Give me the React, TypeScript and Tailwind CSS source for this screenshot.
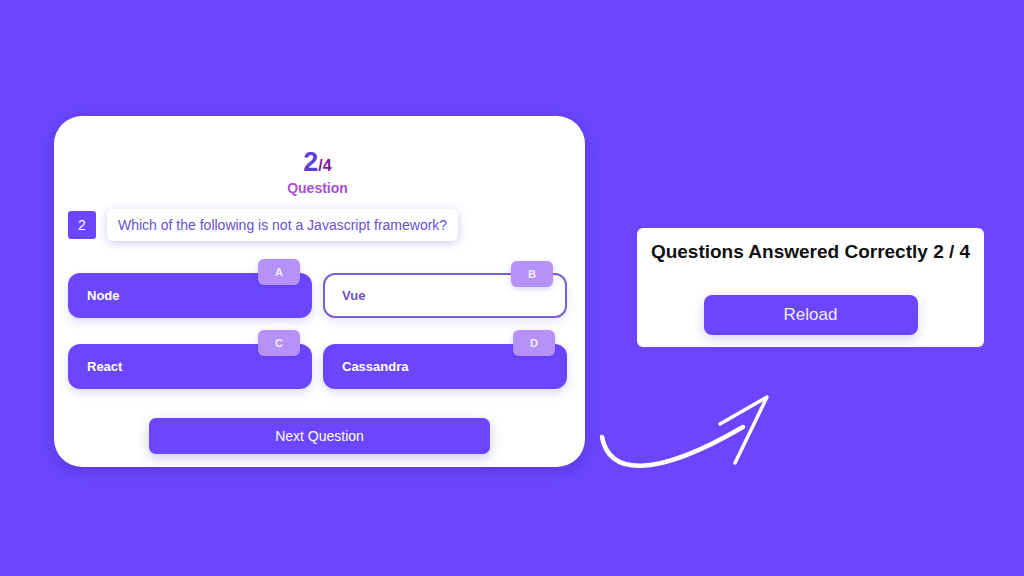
const options = [
  { label: "A", text: "Node", active: true },
  { label: "B", text: "Vue", active: false },
  { label: "C", text: "React", active: true },
  { label: "D", text: "Cassandra", active: true },
];

function OptionButton({ label, text, active }: { label: string; text: string; active: boolean }) {
  return (
    <div
      className={
        active
          ? "relative flex h-[45px] items-center rounded-[12px] bg-[#6b46fe] pl-[19px] text-[13px] font-bold text-white shadow-[0_4px_10px_rgba(80,50,200,0.18)]"
          : "relative flex h-[45px] items-center rounded-[12px] border-2 border-[#7b5fd6] bg-white pl-[17px] text-[13px] font-bold text-[#6b4fd0] shadow-[0_4px_10px_rgba(80,50,200,0.12)]"
      }
    >
      {text}
      <span className="absolute right-[12px] top-[-14px] flex h-[26px] w-[42px] items-center justify-center rounded-[6px] bg-[#b592f7] text-[11px] font-bold text-[#f3ecff] shadow-[0_2px_6px_rgba(80,50,200,0.2)]">
        {label}
      </span>
    </div>
  );
}

function QuizCard() {
  return (
    <div className="flex h-[351px] w-[531px] shrink-0 flex-col rounded-[28px] bg-white pl-[14px] pr-[18px] pt-[33px] shadow-[0_4px_16px_rgba(40,20,120,0.25)]">
      <div className="flex flex-col items-center">
        <div className="flex items-baseline leading-none">
          <span className="text-[27px] font-black text-[#5a3fd8]">2</span>
          <span className="text-[16px] font-bold text-[#7b1fa2]">/4</span>
        </div>
        <div className="mt-[5px] text-[14px] font-bold leading-none text-[#a94fd9]">Question</div>
      </div>

      <div className="mt-[14px] flex items-center gap-[11px]">
        <div className="flex h-[28px] w-[28px] items-center justify-center rounded-[3px] bg-[#6b46fe] text-[14px] text-white">
          2
        </div>
        <div className="flex h-[32px] items-center rounded-[6px] bg-white px-[11px] text-[14px] text-[#6a50d0] shadow-[0_2px_10px_rgba(100,70,220,0.3)]">
          Which of the following is not a Javascript framework?
        </div>
      </div>

      <div className="mt-[32px] grid grid-cols-2 gap-x-[11px] gap-y-[26px]">
        {options.map((o) => (
          <OptionButton key={o.label} {...o} />
        ))}
      </div>

      <div className="mt-[29px] flex justify-center pl-[4px]">
        <button className="flex h-[36px] w-[341px] items-center justify-center rounded-[7px] bg-[#6b46fe] text-[14px] text-white shadow-[0_4px_12px_rgba(60,40,160,0.25)]">
          Next Question
        </button>
      </div>
    </div>
  );
}

function ResultCard() {
  return (
    <div className="flex h-[119px] w-[347px] flex-col items-center rounded-[6px] bg-white pt-[13px]">
      <div className="text-[19px] font-bold leading-[21px] text-[#111111]">Questions Answered Correctly 2 / 4</div>
      <button className="mt-[33px] flex h-[40px] w-[214px] items-center justify-center rounded-[8px] bg-[#6b46fe] text-[17px] text-[#f1ecff] shadow-[0_4px_12px_rgba(60,40,160,0.2)]">
        Reload
      </button>
    </div>
  );
}

function CurvedArrow() {
  return (
    <svg width="180" height="85" viewBox="0 0 180 85" fill="none" className="ml-[-40px] mt-[45px]">
      <path
        d="M5 45 C 12 82, 55 88, 146 35"
        stroke="white"
        strokeWidth="4.5"
        strokeLinecap="round"
      />
      <path d="M123 32 L 170 5 L 138 71" stroke="white" strokeWidth="3.5" strokeLinecap="round" strokeLinejoin="round" />
    </svg>
  );
}

export default function App() {
  return (
    <div
      className="flex h-[576px] w-full overflow-hidden bg-[#6b46fe] pl-[54px] pt-[116px]"
      style={{ fontFamily: '"Liberation Sans", Arial, sans-serif' }}
    >
      <QuizCard />
      <div className="ml-[52px] mt-[112px] flex flex-col">
        <ResultCard />
        <CurvedArrow />
      </div>
    </div>
  );
}
